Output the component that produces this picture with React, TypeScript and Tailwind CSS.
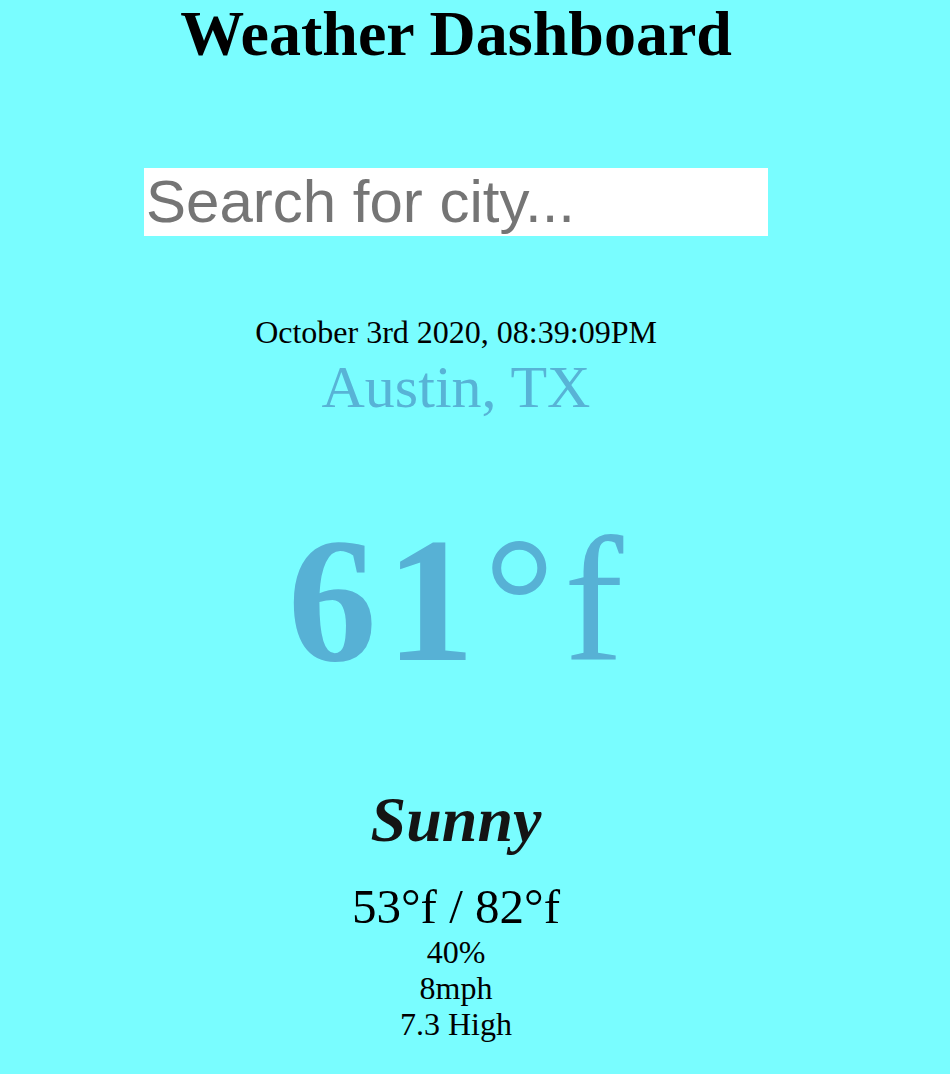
export default function App() {
  return (
    <div className="min-h-[1074px] w-full bg-[#79fdff] font-['Liberation_Serif',serif]">
      <div className="flex w-[912px] flex-col items-center text-center">
        {/* Header */}
        <h1 className="text-[64px] leading-[68px] font-bold text-black">Weather Dashboard</h1>

        <input
          type="text"
          placeholder="Search for city..."
          className="mt-[100px] h-[68px] w-[624px] bg-white px-[2px] font-['Liberation_Sans',sans-serif] text-[60px] text-black placeholder:text-[#757575] outline-none"
        />

        {/* Current weather */}
        <div className="mt-[78px] text-[32px] leading-[37px] text-black">October 3rd 2020, 08:39:09PM</div>
        <div className="mt-[2px] text-[60px] leading-[69px] text-[#58b3d6]">Austin, TX</div>

        <div className="mt-[76px] pl-[8px] text-[178px] leading-[205px] tracking-[9px] text-[#57b1d5]">
          <span className="font-bold">61</span>°f
        </div>

        <div className="mt-[80px] text-[64px] leading-[74px] font-bold italic text-[#141414]">Sunny</div>
        <div className="mt-[22px] text-[49px] leading-[55px] text-black">53°f / 82°f</div>
        <div className="text-[32px] leading-[36px] text-black">
          <div>40%</div>
          <div>8mph</div>
          <div>7.3 High</div>
        </div>
      </div>
    </div>
  )
}
